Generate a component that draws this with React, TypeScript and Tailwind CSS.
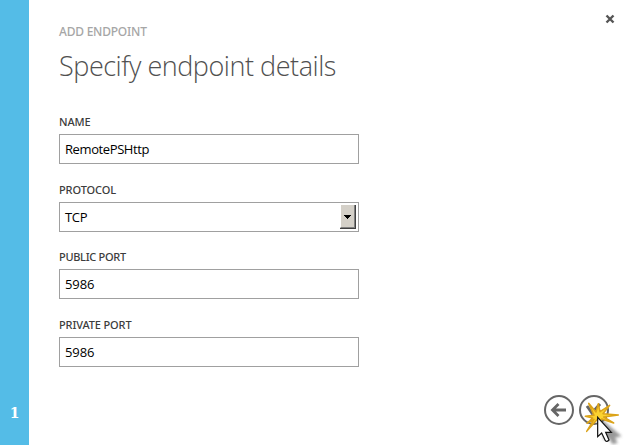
import React from "react";

const sans = "font-['Open_Sans','Noto_Sans',sans-serif]";

type FieldProps = {
  label: string;
  value: string;
  labelTracking?: string;
  valueTracking?: string;
  gap: string;
  select?: boolean;
};

function Field({ label, value, labelTracking = "", valueTracking = "", gap, select }: FieldProps) {
  return (
    <div className={gap}>
      <div className="h-5 font-['Noto_Sans',sans-serif] text-[11px] leading-4 font-medium text-[#3c3c3c]">
        <span className={labelTracking}>{label}</span>
      </div>
      <div className="flex h-[30px] w-[300px] items-center justify-between border border-[#a0a0a0] bg-white pr-0.5 pl-[5px] text-[13px] leading-none text-black">
        <span className={valueTracking}>{value}</span>
        {select && (
          <span className="flex h-6 w-4 items-center justify-center border-r border-b border-[#404040] bg-[#d4d0c8]">
            <span className="flex h-full w-full items-center justify-center border-r border-b border-l border-r-[#808080] border-b-[#808080] border-l-white pt-px">
              <svg width="7" height="4" viewBox="0 0 7 4" shapeRendering="crispEdges">
                <path d="M0 0H7V1H6V2H5V3H4V4H3V3H2V2H1V1H0Z" fill="#000" />
              </svg>
            </span>
          </span>
        )}
      </div>
    </div>
  );
}

function Cursor() {
  return (
    <svg className="absolute left-[575px] top-[393px]" width="51" height="52" viewBox="0 0 153 156">
      <defs>
        <filter id="soft" x="-30%" y="-30%" width="160%" height="160%">
          <feGaussianBlur stdDeviation="5" />
        </filter>
      </defs>
      <path d="M76 76L140 130L120 134L128 150L112 154L102 136L86 140Z" fill="#555" opacity=".6" filter="url(#soft)" />
      <path
        d="M41 31L63 57L70 32L75 56L104 37L84 62L130 66L86 72L116 90L80 78L74 92L68 78L35 115L57 79L36 91L53 75L31 70L57 67Z"
        fill="#fbd22f"
        stroke="#dba31a"
        strokeWidth="4.5"
        strokeLinejoin="round"
      />
      <path d="M68 73V131L80 120L91 143Q96 148 102 141L92 118H109Z" fill="#fff" stroke="#111" strokeWidth="3.6" />
    </svg>
  );
}

export default function App() {
  return (
    <div className={`relative flex h-[445px] w-[626px] overflow-hidden bg-white ${sans}`}>
      <aside className="flex w-[29px] flex-col justify-end bg-[#54bce7] pb-[22px] text-center font-['DejaVu_Serif',serif] text-[14px] leading-5 font-bold text-white">
        1
      </aside>
      <main className="flex flex-1 flex-col pl-[30px]">
        <header className="flex h-[84px] justify-between">
          <div className="pt-6">
            <div className="font-['Noto_Sans',sans-serif] text-[12px] leading-4 font-medium text-[#a6a6a6]">
              <span className="tracking-[-0.22px]">ADD ENDPOINT</span>
            </div>
            <h1 className="mt-2 text-[27px] leading-9 font-light whitespace-nowrap text-[#505050]">
              <span className="tracking-[-0.46px]">Specify endpoint details</span>
            </h1>
          </div>
          <svg className="mt-[14px] mr-[11px]" width="10" height="10" viewBox="0 0 10 10">
            <path d="M1.5 1.5L8.5 8.5M8.5 1.5L1.5 8.5" stroke="#555" strokeWidth="2.4" />
          </svg>
        </header>
        <form className="flex flex-col pt-[30px]">
          <Field label="NAME" value="RemotePSHttp" gap="mb-[18px]" labelTracking="tracking-[-0.1px]" valueTracking="tracking-[-0.4px]" />
          <Field label="PROTOCOL" value="TCP" gap="mb-[17px]" labelTracking="tracking-[-0.1px]" valueTracking="tracking-[-0.3px]" select />
          <Field label="PUBLIC PORT" value="5986" gap="mb-[18px]" labelTracking="tracking-[-0.3px]" valueTracking="tracking-[-0.1px]" />
          <Field label="PRIVATE PORT" value="5986" gap="" labelTracking="tracking-[-0.12px]" valueTracking="tracking-[-0.1px]" />
        </form>
        <footer className="mt-auto mb-[19px] flex justify-end gap-[5px] pr-[17px]">
          <svg width="30" height="32" viewBox="0 0 30 32" fill="none" stroke="#666">
            <circle cx="15" cy="16" r="14" strokeWidth="2" />
            <path d="M8.5 16H22M14.5 10L8.5 16L14.5 22" strokeWidth="2.8" />
          </svg>
          <svg width="30" height="32" viewBox="0 0 30 32" fill="none" stroke="#666">
            <circle cx="15" cy="16" r="14" strokeWidth="2" />
            <path d="M8 12L13 19L21 10" strokeWidth="3" />
          </svg>
        </footer>
      </main>
      <Cursor />
    </div>
  );
}
